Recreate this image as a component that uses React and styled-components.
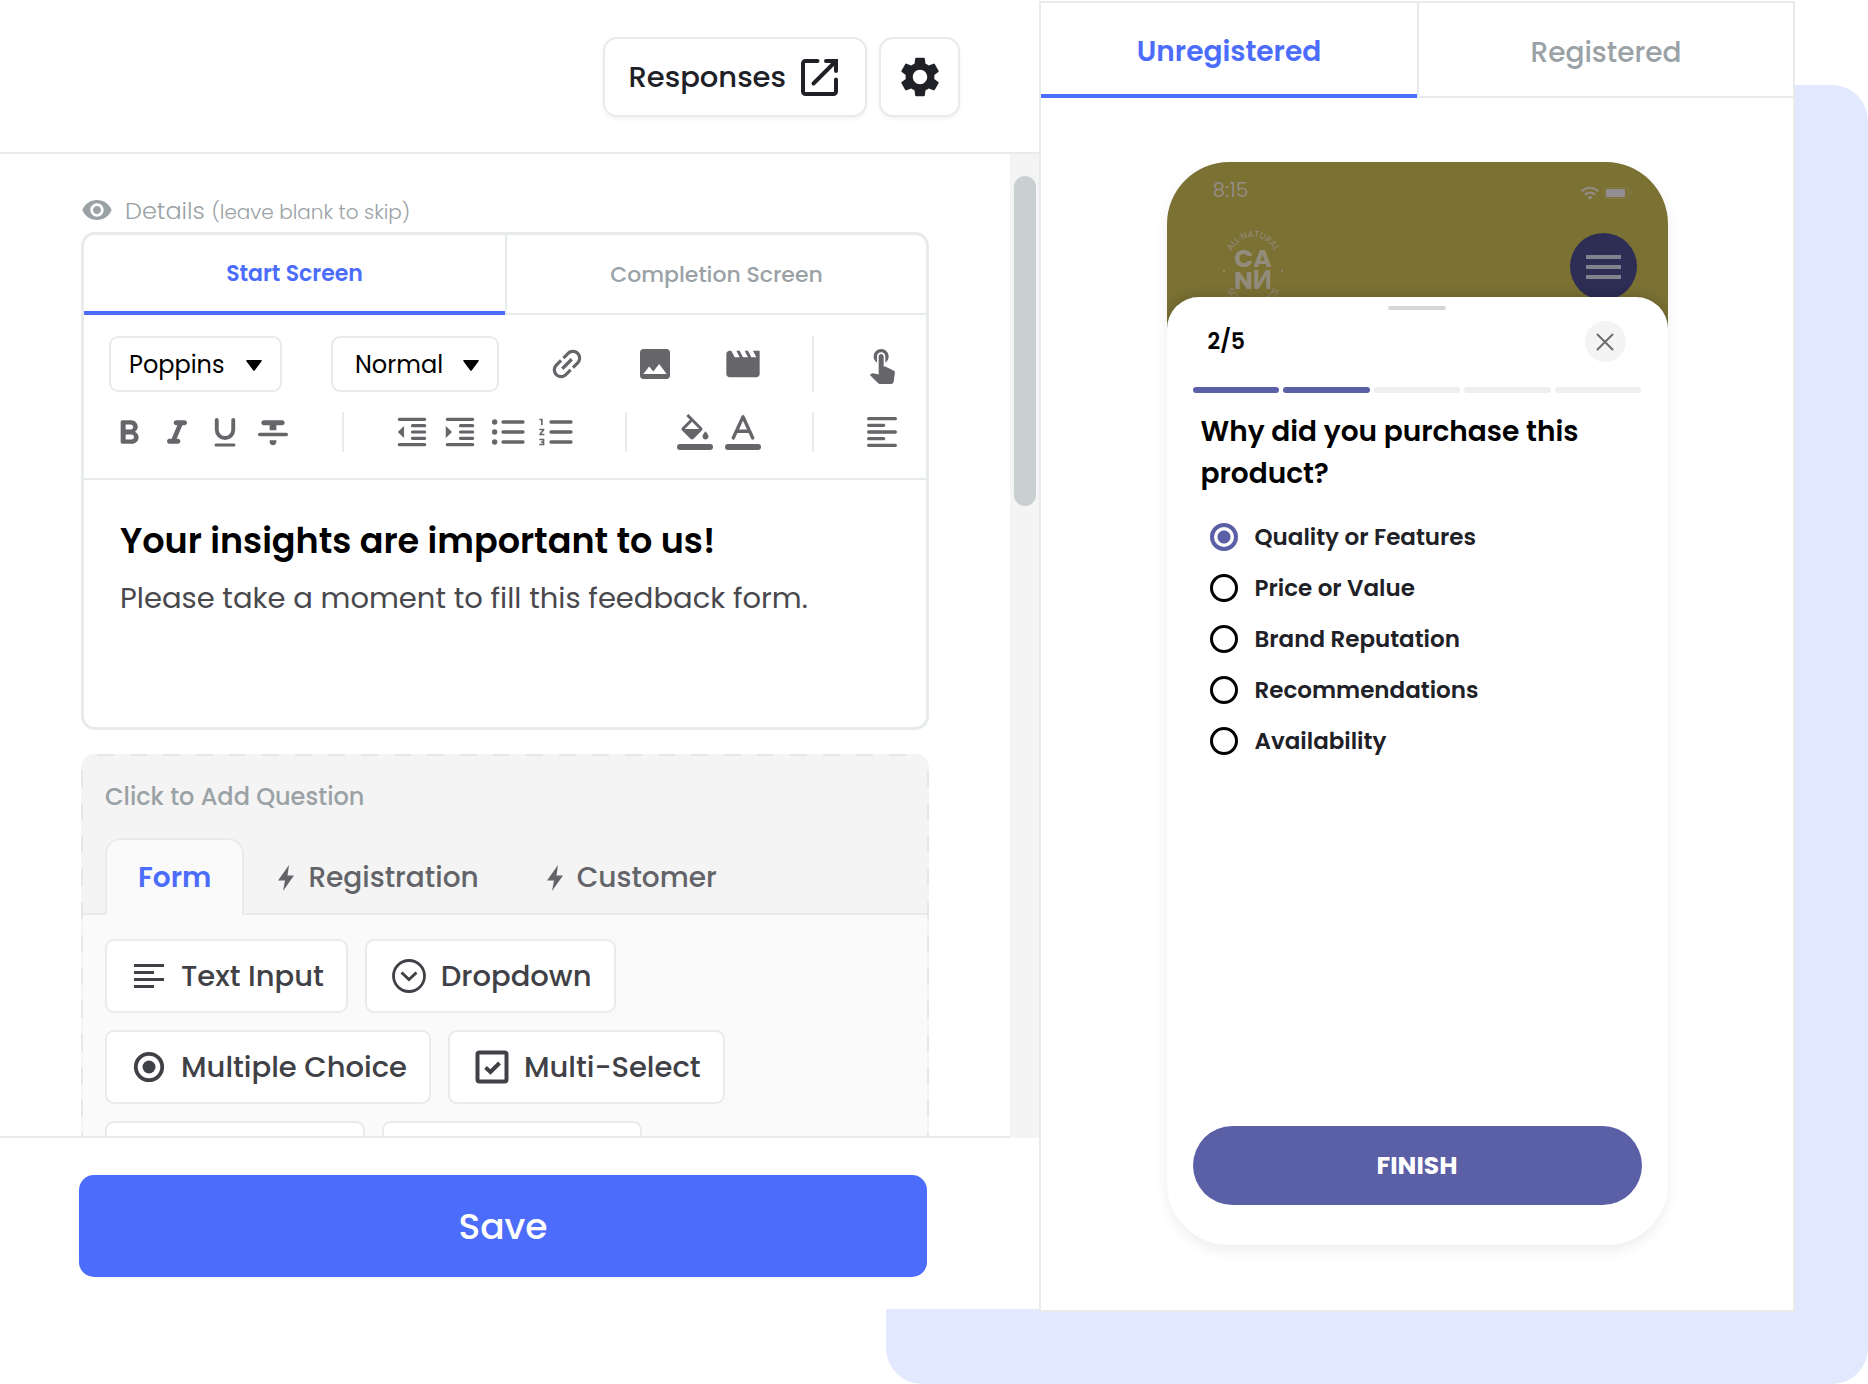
/* USESTATE */
import { useState } from 'react'

/* STYLED-COMPONENTS */
import styled, { createGlobalStyle } from 'styled-components'

/* ICONS */
import {
  MdImage,
  MdMovie,
  MdSettings,
  MdTouchApp,
  MdVisibility,
  MdWifi,
} from 'react-icons/md'

/* COLORS */
const colors = {
  Blue: '#4c6dfb',
  BlueSoft: '#e2e8fd',
  Indigo: '#5b5fa6',
  Ink: '#202127',
  Text: '#404146',
  Icon: '#65656a',
  Muted: '#9aa2a6',
  Line: '#e8ebeb',
  Olive: '#7a7133',
  OliveText: '#938b82',
}

/* GLOBAL */
const GlobalStyle = createGlobalStyle`
  * {
    box-sizing: border-box;
  }

  body {
    margin: 0;
    background: #fff;
    color: ${colors.Ink};
    font-family: Poppins, Inter, 'Liberation Sans', sans-serif;
  }

  button, select, input {
    margin: 0;
    padding: 0;
    border: none;
    background: none;
    color: inherit;
    font: inherit;
  }

  h2, h3, p {
    margin: 0;
  }

  svg {
    display: block;
    flex-shrink: 0;
  }
`

/* PAGE */
const Page = styled.div`
  height: 100vh;
  min-height: 1240px;

  display: grid;
  grid-template: minmax(0, 1fr) / minmax(0, 1fr);
`

const Backdrop = styled.div`
  grid-area: 1 / 1;
  margin: 85px 0 0 886px;

  border-radius: 0 36px 36px 36px;
  background: ${colors.BlueSoft};
`

const Window = styled.div`
  grid-area: 1 / 1;
  margin: 1px 73px 72px 0;

  display: flex;
`

/* EDITOR */
const Editor = styled.main`
  flex: 1039 1 0;
  min-width: 0;
  margin-bottom: 3px;

  display: flex;
  flex-direction: column;

  background: #fff;
`

const Header = styled.header`
  display: flex;
  justify-content: flex-end;
  gap: 12px;

  padding: 36px 79px 35px;
  border-bottom: 2px solid ${colors.Line};
`

const HeaderButton = styled.button`
  height: 80px;
  min-width: 81px;

  display: flex;
  justify-content: center;
  align-items: center;
  gap: 15px;

  padding: 0 ${({ $wide }) => ($wide ? '27px 0 23px' : '0')};

  border: 2px solid ${colors.Line};
  border-radius: 14px;
  box-shadow: 0 2px 4px rgba(0, 0, 0, 0.05);
  background: #fff;

  font-size: 29px;
  font-weight: 500;
`

const Body = styled.div`
  flex: 1;
  min-height: 0;

  display: flex;
`

const ScrollArea = styled.div`
  flex: 1;
  min-width: 0;
  overflow: hidden;

  padding: 36px 81px 0;
  border-bottom: 2px solid ${colors.Line};
`

const Track = styled.div`
  width: 29px;

  padding: 22px 3px 0 4px;
  background: #f4f4f4;
`

const Thumb = styled.div`
  height: 330px;

  border-radius: 11px;
  background: #c9d0d1;
`

const DetailsRow = styled.div`
  height: 40px;
  margin-bottom: 2px;

  display: flex;
  align-items: center;
  gap: 12px;

  color: ${colors.Muted};
  font-size: 24px;
  font-weight: 300;

  & small {
    font-size: 20px;
  }
`

/* CARD */
const Card = styled.section`
  border: 3px solid ${colors.Line};
  border-radius: 14px;
  overflow: hidden;
`

const Tabs = styled.div`
  display: grid;
  grid-template-columns: 1fr 1fr;
`

const Tab = styled.button`
  height: ${({ $large }) => ($large ? '95px' : '80px')};

  padding-top: ${({ $large }) => ($large ? '6px' : '0')};
  border-bottom: ${({ $active }) =>
    $active ? `4px solid ${colors.Blue}` : `2px solid ${colors.Line}`};

  color: ${({ $active }) => ($active ? colors.Blue : colors.Muted)};
  font-size: ${({ $large }) => ($large ? '28px' : '22px')};
  font-weight: ${({ $active }) => ($active ? 600 : 500)};

  & + & {
    border-left: 2px solid ${colors.Line};
  }
`

/* TOOLBAR */
const Toolbar = styled.div`
  display: flex;
  flex-direction: column;
  gap: 20px;

  padding: 21px 0 26px;
  border-bottom: 2px solid ${colors.Line};

  color: ${colors.Icon};
`

const ToolRow = styled.div`
  height: ${({ $tall }) => ($tall ? '56px' : '40px')};

  display: flex;
  justify-content: space-between;
  align-items: center;

  padding: 0 24px 0 25px;
`

const ToolGroup = styled.div`
  display: flex;
  align-items: center;
  gap: ${({ $gap }) => $gap || 8}px;
`

const ToolButton = styled.button`
  width: 40px;
  height: 40px;

  display: flex;
  justify-content: center;
  align-items: center;
`

const Divider = styled.div`
  width: 2px;
  align-self: stretch;
  background: ${colors.Line};
`

const SelectBox = styled.div`
  position: relative;

  & svg {
    position: absolute;
    top: 24px;
    right: 20px;
    pointer-events: none;
  }
`

const Select = styled.select`
  width: ${({ $narrow }) => ($narrow ? '168px' : '173px')};
  height: 56px;

  appearance: none;
  padding: 0 44px 0 ${({ $narrow }) => ($narrow ? '22px' : '18px')};

  border: 2px solid ${colors.Line};
  border-radius: 9px;

  color: #000;
  font-size: 24px;
`

const Message = styled.div`
  min-height: 247px;
  padding: 36px 36px 0;

  & h2 {
    color: #000;
    font-size: 35px;
    font-weight: 600;
    line-height: 50px;
  }

  & p {
    margin-top: 7px;

    color: #48484d;
    font-size: 29px;
    line-height: 50px;
  }
`

/* QUESTIONS */
const dashes = (direction) =>
  `repeating-linear-gradient(${direction}, transparent 0 16px, #e6e8e8 16px 33px)`

const Questions = styled.section`
  margin-top: 24px;
  padding: 2px 2px 0;

  border-radius: 14px 14px 0 0;
  background:
    ${dashes('to right')} top / 100% 2px no-repeat,
    ${dashes('to bottom')} left / 2px 100% no-repeat,
    ${dashes('to bottom')} right / 2px 100% no-repeat,
    #f4f4f4;
`

const QuestionTitle = styled.h3`
  padding: 21px 22px;

  color: ${colors.Muted};
  font-size: 24px;
  font-weight: 500;
  line-height: 40px;
`

const QuestionTabs = styled.div`
  display: flex;

  padding: 0 22px;
  box-shadow: inset 0 -2px ${colors.Line};
`

const QuestionTab = styled.button`
  height: 77px;

  display: flex;
  align-items: center;
  gap: 14px;

  padding: 0 ${({ $active }) => ($active ? '31px' : '32px')};
  border: 2px solid ${({ $active }) => ($active ? colors.Line : 'transparent')};
  border-bottom: none;
  border-radius: 16px 16px 0 0;
  background: ${({ $active }) => ($active ? '#fafafa' : 'transparent')};

  color: ${({ $active }) => ($active ? colors.Blue : '#636469')};
  font-size: 28px;
  font-weight: ${({ $active }) => ($active ? 600 : 500)};
`

const ChipList = styled.div`
  display: flex;
  flex-direction: column;
  gap: 17px;

  padding: 24px 22px;
  background: #fafafa;
`

const ChipRow = styled.div`
  display: flex;
  gap: 17px;
`

const Chip = styled.button`
  height: 74px;
  min-width: ${({ $blank }) => ($blank ? '260px' : '0')};

  display: flex;
  align-items: center;
  gap: 14px;

  padding: 0 22px 0 24px;
  border: 2px solid ${colors.Line};
  border-radius: 9px;
  background: #fff;

  color: ${colors.Text};
  font-size: 29px;
  font-weight: 500;
`

/* FOOTER */
const Footer = styled.footer`
  padding: 37px 112px 32px 79px;
`

const SaveButton = styled.button`
  width: 100%;
  height: 102px;

  border-radius: 15px;
  background: ${colors.Blue};

  color: #fff;
  font-size: 36px;
  font-weight: 500;
`

/* PREVIEW */
const Preview = styled.aside`
  flex: 752 1 0;
  min-width: 0;

  display: flex;
  flex-direction: column;

  border: 2px solid ${colors.Line};
  background: #fff;
`

const Stage = styled.div`
  flex: 1;
  min-height: 0;

  display: flex;
  justify-content: center;

  padding: 64px 24px 65px;
`

const Phone = styled.div`
  width: 501px;

  display: flex;
  flex-direction: column;

  border-radius: 62px;
  overflow: hidden;
  background: linear-gradient(${colors.Olive} 200px, #fff 200px);
  box-shadow: 0 6px 14px rgba(0, 0, 0, 0.07);
`

const PhoneTop = styled.div`
  height: 135px;
  overflow: hidden;

  padding: 16px 31px 0 46px;
  color: ${colors.OliveText};
`

const StatusBar = styled.div`
  height: 24px;

  display: flex;
  justify-content: space-between;
  align-items: center;

  padding-right: 5px;
  font-size: 20px;
`

const StatusIcons = styled.div`
  display: flex;
  align-items: center;
  gap: 4px;

  padding-top: 5px;
`

const Brand = styled.div`
  display: flex;
  justify-content: space-between;

  padding: 26px 0 0 5px;
`

const MenuButton = styled.button`
  width: 67px;
  height: 67px;

  display: flex;
  flex-direction: column;
  justify-content: center;
  align-items: center;
  gap: 6px;

  margin-top: 5px;
  border-radius: 50%;
  background: #2d2d55;

  & span {
    width: 35px;
    height: 4px;
    background: #80838e;
  }
`

const Sheet = styled.form`
  flex: 1;

  display: flex;
  flex-direction: column;

  padding: 9px 26px 40px;
  border-radius: 32px 32px 0 0;
  background: #fff;
  box-shadow: 0 0 14px rgba(0, 0, 0, 0.2);
`

const Handle = styled.div`
  width: 58px;
  height: 4px;

  align-self: center;

  border-radius: 2px;
  background: #d6d6d6;
`

const SheetHead = styled.div`
  display: flex;
  justify-content: space-between;
  align-items: center;

  padding: 11px 16px 25px 15px;

  color: #000;
  font-size: 22px;
  font-weight: 600;
`

const CloseButton = styled.button`
  width: 41px;
  height: 41px;

  display: flex;
  justify-content: center;
  align-items: center;

  border-radius: 50%;
  background: #f4f4f4;
`

const Steps = styled.div`
  display: grid;
  grid-template-columns: repeat(5, 1fr);
  gap: 4px;
`

const Step = styled.div`
  height: 6px;

  border-radius: 3px;
  background: ${({ $done }) => ($done ? colors.Indigo : '#efeff2')};
`

const Question = styled.h2`
  padding: 18px 8px 0;

  color: #000;
  font-size: 28px;
  font-weight: 600;
  line-height: 42px;
`

const Options = styled.div`
  flex: 1;
  padding: 16px 17px 0;
`

const Option = styled.label`
  height: 51px;

  display: flex;
  align-items: center;
  gap: 17px;

  font-size: 23px;
  font-weight: 600;

  & input {
    width: 28px;
    height: 28px;

    appearance: none;
    border: 3px solid #000;
    border-radius: 50%;
  }

  & input:checked {
    border: 4px solid ${colors.Indigo};
    background: radial-gradient(${colors.Indigo} 6px, transparent 7px);
  }
`

const FinishButton = styled.button`
  height: 79px;

  border-radius: 40px;
  background: ${colors.Indigo};

  color: #fff;
  font-size: 25px;
  font-weight: 700;
`

/* TOOL ICONS */
const Glyph = ({ size = 40, children }) => (
  <svg width={size} height={size} viewBox="0 0 24 24" fill="currentColor">
    {children}
  </svg>
)

const Lines = ({ d, width = 2 }) => (
  <path
    d={d}
    fill="none"
    stroke="currentColor"
    strokeWidth={width}
    strokeLinecap="round"
    strokeLinejoin="round"
  />
)

const LinkIcon = () => (
  <Glyph>
    <path
      transform="rotate(-45 12 12)"
      d="M3.9 12c0-1.71 1.39-3.1 3.1-3.1h4V7H7c-2.76 0-5 2.24-5 5s2.24 5 5 5h4v-1.9H7c-1.71 0-3.1-1.39-3.1-3.1zM8 13h8v-2H8v2zm9-6h-4v1.9h4c1.71 0 3.1 1.39 3.1 3.1s-1.39 3.1-3.1 3.1h-4V17h4c2.76 0 5-2.24 5-5s-2.24-5-5-5z"
    />
  </Glyph>
)

const BoldIcon = () => (
  <Glyph>
    <path d="M15.6 11.79c.97-.67 1.65-1.77 1.65-2.79 0-2.26-1.75-4-4-4H8c-.55 0-1 .45-1 1v12c0 .55.45 1 1 1h5.78c2.07 0 3.96-1.69 3.97-3.77.01-1.53-.85-2.84-2.15-3.44zM10 7.5h3c.83 0 1.5.67 1.5 1.5s-.67 1.5-1.5 1.5h-3v-3zm3.5 9H10v-3h3.5c.83 0 1.5.67 1.5 1.5s-.67 1.5-1.5 1.5z" />
  </Glyph>
)

const ItalicIcon = () => (
  <Glyph>
    <path d="M10 6.5c0 .83.67 1.5 1.5 1.5h.71l-3.42 8H7.5c-.83 0-1.5.67-1.5 1.5S6.67 19 7.5 19h5c.83 0 1.5-.67 1.5-1.5s-.67-1.5-1.5-1.5h-.71l3.42-8h1.29c.83 0 1.5-.67 1.5-1.5S17.33 5 16.5 5h-5c-.83 0-1.5.67-1.5 1.5z" />
  </Glyph>
)

const UnderlineIcon = () => (
  <Glyph size={36}>
    <Lines d="M6.5 4v6.5a5.5 5.5 0 0 0 11 0V4" width={2.6} />
    <Lines d="M6 20.7h12" />
  </Glyph>
)

const StrikeIcon = () => (
  <Glyph>
    <path d="M12 20c1.1 0 2-.9 2-2v-1h-4v1c0 1.1.9 2 2 2zM5 6.5C5 7.33 5.67 8 6.5 8H10v3h4V8h3.5c.83 0 1.5-.67 1.5-1.5S18.33 5 17.5 5h-11C5.67 5 5 5.67 5 6.5zM4 14.5h16c.55 0 1-.45 1-1s-.45-1-1-1H4c-.55 0-1 .45-1 1s.45 1 1 1z" />
  </Glyph>
)

const indentLines = 'M4 4h16M12.3 8h7.7M12.3 12h7.7M12.3 16h7.7M4 20h16'

const OutdentIcon = () => (
  <Glyph size={38}>
    <Lines d={indentLines} />
    <path d="M3 12l4-3.800v7.600z" />
  </Glyph>
)

const IndentIcon = () => (
  <Glyph size={38}>
    <Lines d={indentLines} />
    <path d="M7 12l-4-3.800v7.600z" />
  </Glyph>
)

const BulletIcon = () => (
  <Glyph>
    <Lines d="M9 6h12M9 12h12M9 18h12" />
    <circle cx="4" cy="6" r="1.6" />
    <circle cx="4" cy="12" r="1.6" />
    <circle cx="4" cy="18" r="1.6" />
  </Glyph>
)

const NumberIcon = () => (
  <Glyph>
    <Lines d="M9 6h12M9 12h12M9 18h12" />
    <path d="M2 17h2v.5H3v1h1v.5H2v1h3v-4H2v1zm1-9h1V4H2v1h1v3zm-1 3h1.8L2 13.1v.9h3v-1H3.2L5 10.9V10H2v1z" />
  </Glyph>
)

const FillIcon = () => (
  <Glyph size={36}>
    <path d="M16.56 8.94L7.62 0 6.21 1.41l2.38 2.38-5.15 5.15c-.59.59-.59 1.54 0 2.12l5.5 5.5c.29.29.68.44 1.06.44s.77-.15 1.06-.44l5.5-5.5c.59-.58.59-1.53 0-2.12zM5.21 10L10 5.21 14.79 10H5.21zM19 11.5s-2 2.17-2 3.5c0 1.1.9 2 2 2s2-.9 2-2c0-1.33-2-3.5-2-3.5z" />
    <rect y="20" width="24" height="4" rx="2" />
  </Glyph>
)

const ColorIcon = () => (
  <Glyph size={36}>
    <Lines d="M5.5 16L12 1.8 18.500 16M7.8 11.5h8.4" width={2.2} />
    <rect y="20" width="24" height="4" rx="2" />
  </Glyph>
)

const AlignIcon = () => (
  <Glyph>
    <Lines d="M4 4h16M4 8h9M4 12h16M4 16h9M4 20h16" />
  </Glyph>
)

/* CHIP ICONS */
const ChipIcon = ({ children }) => (
  <svg width="36" height="36" viewBox="0 0 36 36" fill="none" stroke="currentColor">
    {children}
  </svg>
)

const TextInputIcon = () => (
  <ChipIcon>
    <path strokeWidth="3" d="M3 7.500h30M3 14.500h20M3 21.500h30M3 28.500h20" />
  </ChipIcon>
)

const DropdownIcon = () => (
  <ChipIcon>
    <circle cx="18" cy="18" r="15.5" strokeWidth="2.8" />
    <path strokeWidth="3" d="M10.5 14.5l7.5 7 7.5-7" />
  </ChipIcon>
)

const MultipleChoiceIcon = () => (
  <ChipIcon>
    <circle cx="18" cy="18" r="13.2" strokeWidth="3.8" />
    <circle cx="18" cy="18" r="6.5" fill="currentColor" stroke="none" />
  </ChipIcon>
)

const MultiSelectIcon = () => (
  <ChipIcon>
    <rect x="3.5" y="3.5" width="29" height="29" rx="2" strokeWidth="4" />
    <path strokeWidth="4" d="M11.5 18.5l5 4.5 9-9" />
  </ChipIcon>
)

/* OTHER ICONS */
const OpenIcon = () => (
  <svg
    width="37"
    height="37"
    viewBox="0 0 37 37"
    fill="none"
    stroke="currentColor"
    strokeWidth="4"
    strokeLinecap="round"
  >
    <path d="M16.5 2H4.5A2.5 2.5 0 0 0 2 4.5v28A2.5 2.5 0 0 0 4.5 35h28a2.5 2.5 0 0 0 2.5-2.5V20.5" />
    <path d="M25 2h10v10M12.5 24.5L34 3" />
  </svg>
)

const BoltIcon = () => (
  <svg width="16" height="26" viewBox="0 0 16 26" fill="currentColor">
    <path d="M11 0L0 15.5h7L5 26l11-15.5H9.5z" />
  </svg>
)

const ArrowIcon = () => (
  <svg width="16" height="11" viewBox="0 0 16 11">
    <path d="M1 0h14q1.5 0 .6 1.2L8.7 10.5q-.7.9-1.4 0L.4 1.2Q-.5 0 1 0z" />
  </svg>
)

const CloseIcon = () => (
  <svg width="18" height="18" viewBox="0 0 18 18" stroke="#6c6c6c" strokeWidth="2" strokeLinecap="round">
    <path d="M1.5 1.5l15 15M16.5 1.5l-15 15" />
  </svg>
)

const BatteryIcon = () => (
  <svg width="28" height="12" viewBox="0 0 28 12">
    <rect x=".5" y=".5" width="24" height="11" rx="3" fill="none" stroke="#857c50" />
    <rect x="2" y="2" width="19" height="8" rx="1" fill="#938e93" />
    <path d="M27 4v4" stroke="#857c50" />
  </svg>
)

/* LOGO */
const Logo = () => (
  <svg width="70" height="84" viewBox="0 0 70 84" fill="#938c7c">
    <path id="logoTop" d="M8 44a27 35 0 0 1 54 0" fill="none" />
    <path id="logoBottom" d="M4 42a31 38 0 0 0 62 0" fill="none" />
    <text fontSize="9" textAnchor="middle">
      <textPath href="#logoTop" startOffset="50%">
        ALL·NATURAL
      </textPath>
    </text>
    <text fontSize="9" textAnchor="middle">
      <textPath href="#logoBottom" startOffset="50%">
        SOCIAL TONICS
      </textPath>
    </text>
    <circle cx="6" cy="43" r="1" />
    <circle cx="64" cy="43" r="1" />
    <text x="35" y="39" fontSize="25" fontWeight="700" textAnchor="middle">
      CA
    </text>
    <text x="35" y="61" fontSize="25" fontWeight="700" textAnchor="middle">
      NИ
    </text>
  </svg>
)

/* DATAS */
const styleTools = [
  ['Bold', BoldIcon],
  ['Italic', ItalicIcon],
  ['Underline', UnderlineIcon],
  ['Strikethrough', StrikeIcon],
]

const listTools = [
  ['Outdent', OutdentIcon],
  ['Indent', IndentIcon],
  ['Bulleted list', BulletIcon],
  ['Numbered list', NumberIcon],
]

const colorTools = [
  ['Fill color', FillIcon],
  ['Text color', ColorIcon],
]

const answers = [
  'Quality or Features',
  'Price or Value',
  'Brand Reputation',
  'Recommendations',
  'Availability',
]

/* TOOLS */
function Tools({ list }) {
  return (
    <ToolGroup>
      {list.map(([label, Icon]) => (
        <ToolButton key={label} type="button" aria-label={label}>
          <Icon />
        </ToolButton>
      ))}
    </ToolGroup>
  )
}

/* APP */
function App() {
  /* TABS */
  const [screen, setScreen] = useState('start')
  const [group, setGroup] = useState('form')
  const [visitor, setVisitor] = useState('unregistered')

  /* ANSWER SELECTED */
  const [answer, setAnswer] = useState(answers[0])

  /* RETURN */
  return (
    <Page>
      <GlobalStyle />
      <Backdrop />

      <Window>
        {/* EDITOR */}
        <Editor>
          <Header>
            <HeaderButton type="button" $wide>
              Responses
              <OpenIcon />
            </HeaderButton>
            <HeaderButton type="button" aria-label="Settings">
              <MdSettings size={48} />
            </HeaderButton>
          </Header>

          <Body>
            <ScrollArea>
              <DetailsRow>
                <MdVisibility size={32} />
                <span>
                  Details <small>(leave blank to skip)</small>
                </span>
              </DetailsRow>

              <Card>
                <Tabs>
                  <Tab
                    type="button"
                    $active={screen === 'start'}
                    onClick={() => setScreen('start')}
                  >
                    Start Screen
                  </Tab>
                  <Tab
                    type="button"
                    $active={screen === 'completion'}
                    onClick={() => setScreen('completion')}
                  >
                    Completion Screen
                  </Tab>
                </Tabs>

                {/* TOOLBAR */}
                <Toolbar>
                  <ToolRow $tall>
                    <ToolGroup $gap={49}>
                      <SelectBox>
                        <Select aria-label="Font">
                          <option>Poppins</option>
                        </Select>
                        <ArrowIcon />
                      </SelectBox>
                      <SelectBox>
                        <Select aria-label="Text style" $narrow>
                          <option>Normal</option>
                        </Select>
                        <ArrowIcon />
                      </SelectBox>
                    </ToolGroup>
                    <ToolGroup $gap={48}>
                      <ToolButton type="button" aria-label="Insert link">
                        <LinkIcon />
                      </ToolButton>
                      <ToolButton type="button" aria-label="Insert image">
                        <MdImage size={40} />
                      </ToolButton>
                      <ToolButton type="button" aria-label="Insert video">
                        <MdMovie size={40} />
                      </ToolButton>
                    </ToolGroup>
                    <Divider />
                    <ToolButton type="button" aria-label="Insert button">
                      <MdTouchApp size={40} />
                    </ToolButton>
                  </ToolRow>

                  <ToolRow>
                    <Tools list={styleTools} />
                    <Divider />
                    <Tools list={listTools} />
                    <Divider />
                    <Tools list={colorTools} />
                    <Divider />
                    <ToolButton type="button" aria-label="Align left">
                      <AlignIcon />
                    </ToolButton>
                  </ToolRow>
                </Toolbar>

                <Message>
                  <h2>Your insights are important to us!</h2>
                  <p>Please take a moment to fill this feedback form.</p>
                </Message>
              </Card>

              {/* QUESTIONS */}
              <Questions>
                <QuestionTitle>Click to Add Question</QuestionTitle>
                <QuestionTabs>
                  <QuestionTab
                    type="button"
                    $active={group === 'form'}
                    onClick={() => setGroup('form')}
                  >
                    Form
                  </QuestionTab>
                  <QuestionTab
                    type="button"
                    $active={group === 'registration'}
                    onClick={() => setGroup('registration')}
                  >
                    <BoltIcon />
                    Registration
                  </QuestionTab>
                  <QuestionTab
                    type="button"
                    $active={group === 'customer'}
                    onClick={() => setGroup('customer')}
                  >
                    <BoltIcon />
                    Customer
                  </QuestionTab>
                </QuestionTabs>

                <ChipList>
                  <ChipRow>
                    <Chip type="button">
                      <TextInputIcon />
                      Text Input
                    </Chip>
                    <Chip type="button">
                      <DropdownIcon />
                      Dropdown
                    </Chip>
                  </ChipRow>
                  <ChipRow>
                    <Chip type="button">
                      <MultipleChoiceIcon />
                      Multiple Choice
                    </Chip>
                    <Chip type="button">
                      <MultiSelectIcon />
                      Multi-Select
                    </Chip>
                  </ChipRow>
                  <ChipRow aria-hidden="true">
                    <Chip as="div" $blank />
                    <Chip as="div" $blank />
                  </ChipRow>
                </ChipList>
              </Questions>
            </ScrollArea>

            <Track>
              <Thumb />
            </Track>
          </Body>

          <Footer>
            <SaveButton type="button">Save</SaveButton>
          </Footer>
        </Editor>

        {/* PREVIEW */}
        <Preview>
          <Tabs>
            <Tab
              type="button"
              $large
              $active={visitor === 'unregistered'}
              onClick={() => setVisitor('unregistered')}
            >
              Unregistered
            </Tab>
            <Tab
              type="button"
              $large
              $active={visitor === 'registered'}
              onClick={() => setVisitor('registered')}
            >
              Registered
            </Tab>
          </Tabs>

          <Stage>
            <Phone>
              <PhoneTop>
                <StatusBar>
                  8:15
                  <StatusIcons>
                    <MdWifi size={20} />
                    <BatteryIcon />
                  </StatusIcons>
                </StatusBar>
                <Brand>
                  <Logo />
                  <MenuButton type="button" aria-label="Menu">
                    <span />
                    <span />
                    <span />
                  </MenuButton>
                </Brand>
              </PhoneTop>

              {/* SHEET */}
              <Sheet onSubmit={(e) => e.preventDefault()}>
                <Handle />
                <SheetHead>
                  2/5
                  <CloseButton type="button" aria-label="Close">
                    <CloseIcon />
                  </CloseButton>
                </SheetHead>
                <Steps>
                  {[1, 2, 3, 4, 5].map((step) => (
                    <Step key={step} $done={step <= 2} />
                  ))}
                </Steps>
                <Question>Why did you purchase this product?</Question>
                <Options>
                  {answers.map((name) => (
                    <Option key={name}>
                      <input
                        type="radio"
                        name="reason"
                        checked={answer === name}
                        onChange={() => setAnswer(name)}
                      />
                      {name}
                    </Option>
                  ))}
                </Options>
                <FinishButton type="submit">FINISH</FinishButton>
              </Sheet>
            </Phone>
          </Stage>
        </Preview>
      </Window>
    </Page>
  )
}

export default App
